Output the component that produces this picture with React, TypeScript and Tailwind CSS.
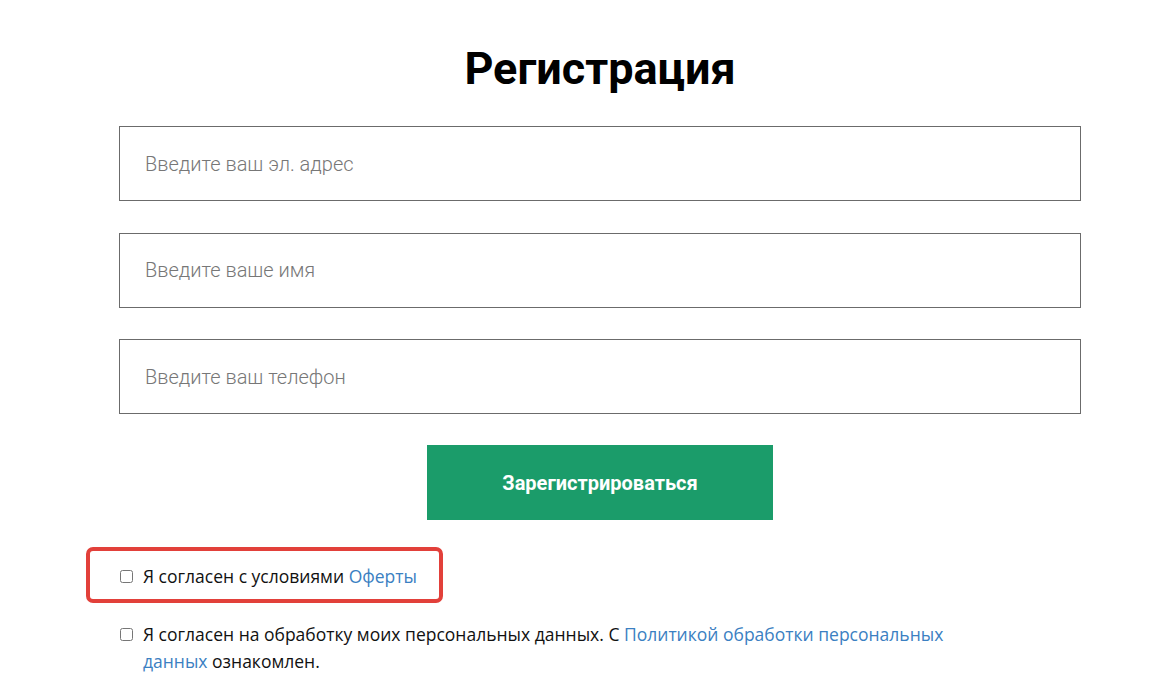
export default function App() {
  const fields = ['Введите ваш эл. адрес', 'Введите ваше имя', 'Введите ваш телефон'];
  return (
    <div className="min-h-[699px] bg-white font-['Roboto',sans-serif]">
      <div className="ml-[119px] w-[962px] pt-[45px]">
        <h1 className="text-center text-[45px] font-bold leading-[48px] text-black">Регистрация</h1>
        <form className="mt-[33px] flex flex-col gap-[31.5px]">
          {fields.map((f) => (
            <input
              key={f}
              type="text"
              placeholder={f}
              className="h-[75px] w-full border border-[#6b6b6b] px-[25px] text-[20px] font-light text-[#333] placeholder:text-[#777] outline-none"
            />
          ))}
        </form>
        <div className="mt-[31px] flex justify-center">
          <button className="h-[75px] w-[346px] bg-[#1b9c6a] text-[20px] font-bold text-white">
            Зарегистрироваться
          </button>
        </div>
        <div className="mt-[43px] font-['Open_Sans',sans-serif] text-[17.5px] text-[#111]">
          <div className="relative">
            <label className="flex items-start gap-[10px] leading-[27px]">
              <input type="checkbox" className="mt-[7px] ml-[1px] h-[13px] w-[13px]" />
              <span>
                Я согласен с условиями <a className="text-[#3b80c2]">Оферты</a>
              </span>
            </label>
            <div className="pointer-events-none absolute left-[-33px] top-[-16px] h-[56px] w-[357px] rounded-[7px] border-[4px] border-[#e2403a]"></div>
          </div>
          <label className="mt-[31px] flex items-start gap-[10px] leading-[27px]">
            <input type="checkbox" className="mt-[7px] ml-[1px] h-[13px] w-[13px]" />
            <span className="w-[830px]">
              Я согласен на обработку моих персональных данных. С{' '}
              <a className="text-[#3b80c2]">Политикой обработки персональных данных</a> ознакомлен.
            </span>
          </label>
        </div>
      </div>
    </div>
  );
}
